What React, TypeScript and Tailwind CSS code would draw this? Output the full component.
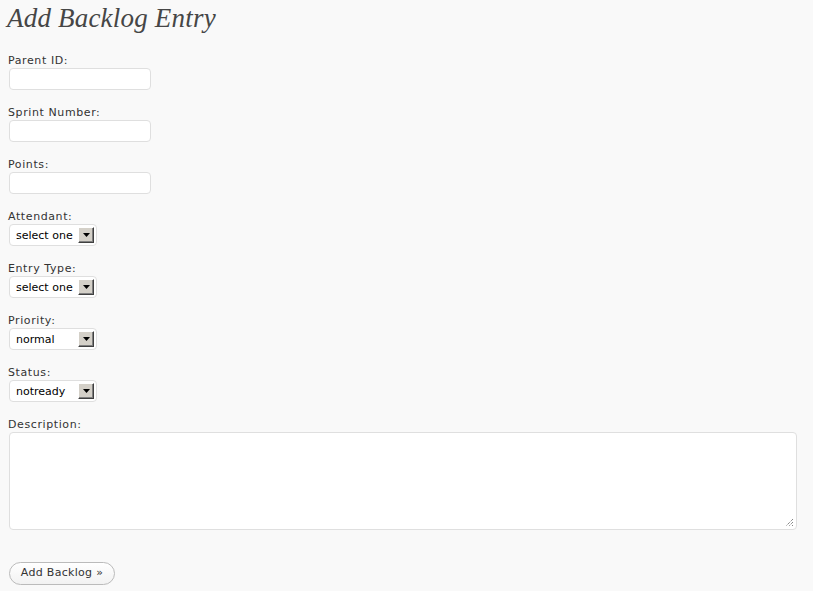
const labelFont = { fontFamily: '"DejaVu Sans", Verdana, sans-serif' };

function TextField({ label }: { label: string }) {
  return (
    <div className="h-[52px]">
      <div className="h-[15px] text-[11px] leading-[15px] tracking-[0.6px] text-[#333]">{label}</div>
      <div className="ml-px h-[22px] w-[142px] rounded-[4px] border border-[#dfdfdf] bg-white" />
    </div>
  );
}

function SelectField({ label, value }: { label: string; value: string }) {
  return (
    <div className="h-[52px]">
      <div className="h-[15px] text-[11px] leading-[15px] tracking-[0.6px] text-[#333]">{label}</div>
      <div className="ml-px flex h-[22px] w-[88px] items-center justify-between rounded-[4px] border border-[#dfdfdf] bg-white pl-[6px] pr-[2px]">
        <span className="text-[11px] leading-none text-black">{value}</span>
        <span className="flex h-[16px] w-[16px] items-center justify-center border border-t-white border-l-white border-r-[#404040] border-b-[#404040] bg-[#d4d0c8] shadow-[inset_-1px_-1px_0_#808080]">
          <svg width="7" height="4" viewBox="0 0 7 4">
            <path d="M0 0h7L3.5 4z" fill="#000" />
          </svg>
        </span>
      </div>
    </div>
  );
}

export default function App() {
  return (
    <div className="min-h-[591px] bg-[#f9f9f9] pl-2" style={labelFont}>
      <h2
        className="h-[53px] pt-[4px] text-[27px] italic leading-[28px] tracking-[0.2px] text-[#464646]"
        style={{ fontFamily: 'Georgia, "Liberation Serif", serif', marginLeft: -1 }}
      >
        Add Backlog Entry
      </h2>

      <TextField label="Parent ID:" />
      <TextField label="Sprint Number:" />
      <TextField label="Points:" />
      <SelectField label="Attendant:" value="select one" />
      <SelectField label="Entry Type:" value="select one" />
      <SelectField label="Priority:" value="normal" />
      <SelectField label="Status:" value="notready" />

      <div>
        <div className="h-[15px] text-[11px] leading-[15px] tracking-[0.6px] text-[#333]">Description:</div>
        <div className="relative ml-px h-[98px] w-[788px] rounded-[4px] border border-[#dfdfdf] bg-white">
          <svg className="absolute bottom-[2px] right-[2px]" width="9" height="9" viewBox="0 0 9 9">
            <path d="M8 1L1 8M8 4L4 8M8 7L7 8" stroke="#555" strokeWidth="1" strokeDasharray="1 1" />
          </svg>
        </div>
      </div>

      <div className="pt-[32px]">
        <button className="ml-px flex h-[23px] w-[106px] items-center justify-center rounded-full border border-[#bbb] bg-gradient-to-b from-white to-[#f2f2f2] text-[11px] tracking-[0.3px] text-[#333]">
          Add Backlog »
        </button>
      </div>
    </div>
  );
}
